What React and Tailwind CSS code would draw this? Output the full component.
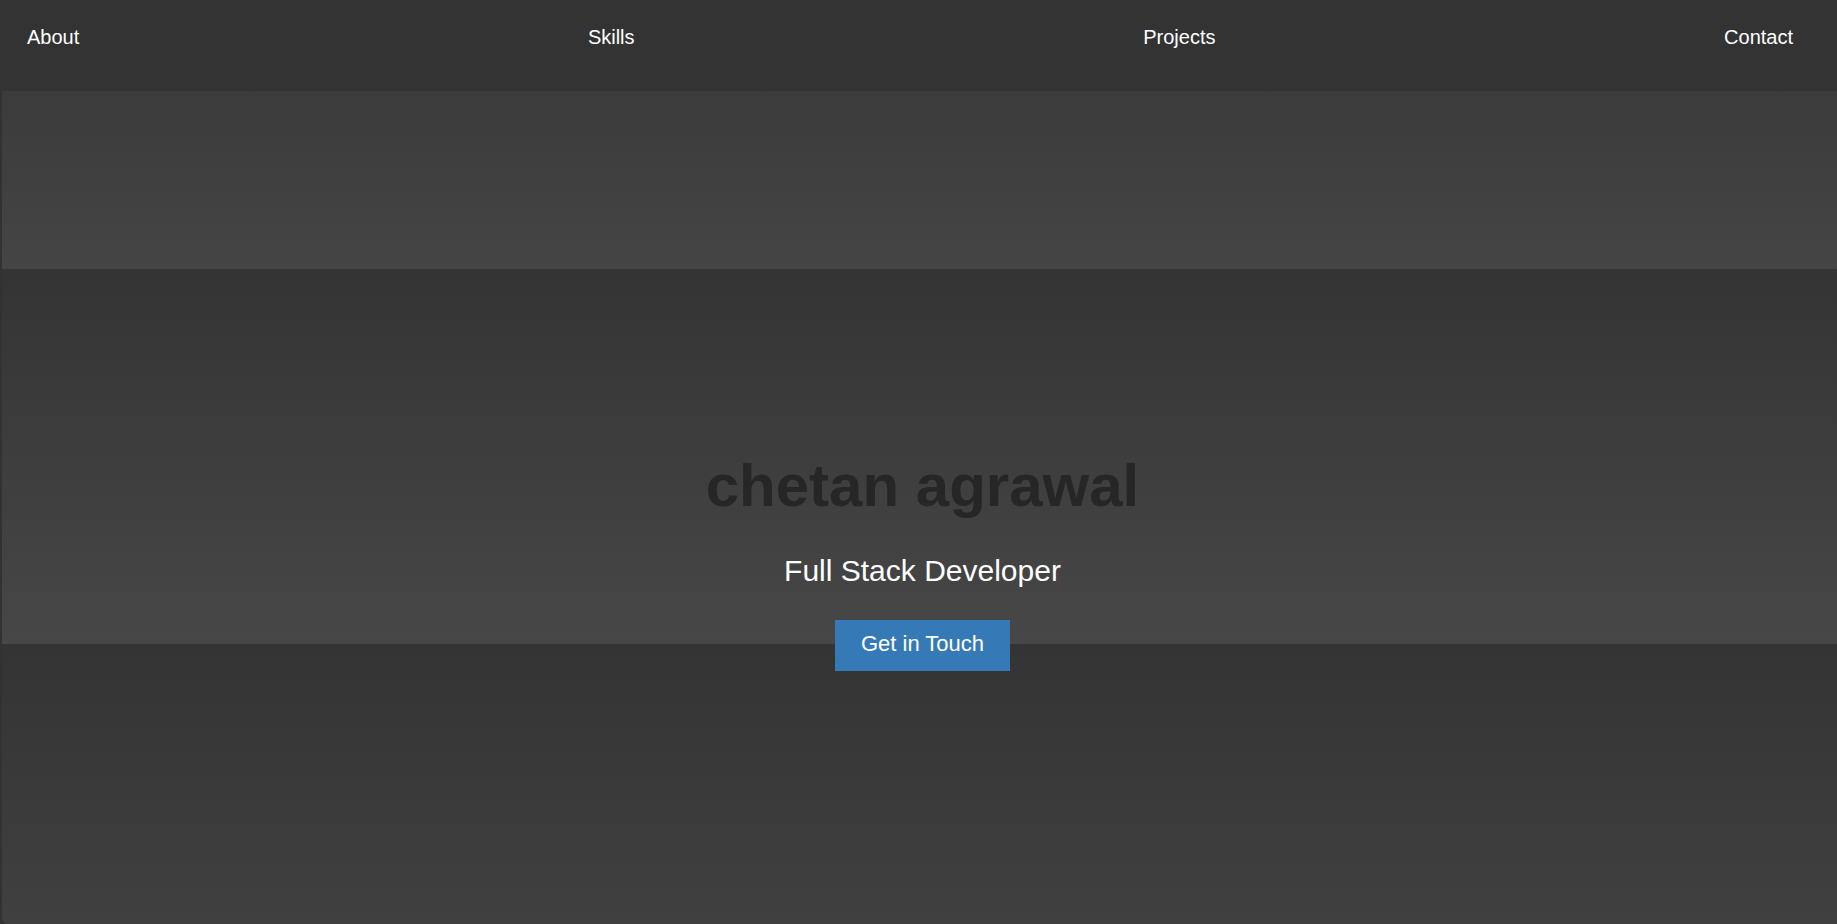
export default function App() {
  const font = { fontFamily: '"Liberation Sans", Arial, sans-serif' };
  return (
    <div className="min-h-[924px] bg-[#323232] text-white overflow-hidden" style={font}>
      <header className="h-[91px] bg-[#333333] pt-[26px] pl-[27px] pr-[44px]">
        <nav className="flex justify-between text-[20px] leading-[23px]">
          <a className="text-white">About</a>
          <a className="text-white">Skills</a>
          <a className="text-white">Projects</a>
          <a className="text-white">Contact</a>
        </nav>
      </header>
      <section className="ml-[2px] h-[178px] bg-linear-to-b from-[#3b3b3b] to-[#454545]"></section>
      <section className="ml-[2px] h-[375px] bg-linear-to-b from-[#343434] to-[#474747] pt-[182px] pl-[6px] flex flex-col items-center">
        <h1 className="text-[60px] leading-[69px] font-bold text-[#262626]">chetan agrawal</h1>
        <p className="mt-[33px] text-[30px] leading-[35px] text-white">Full Stack Developer</p>
        <button className="relative z-10 mt-[32px] bg-[#357ab7] text-white text-[22px] leading-[25px] px-[26px] pt-[11px] pb-[15px] cursor-pointer">
          Get in Touch
        </button>
      </section>
      <section className="ml-[2px] h-[280px] rounded-bl-[6px] bg-linear-to-b from-[#343434] to-[#404040]"></section>
    </div>
  );
}
